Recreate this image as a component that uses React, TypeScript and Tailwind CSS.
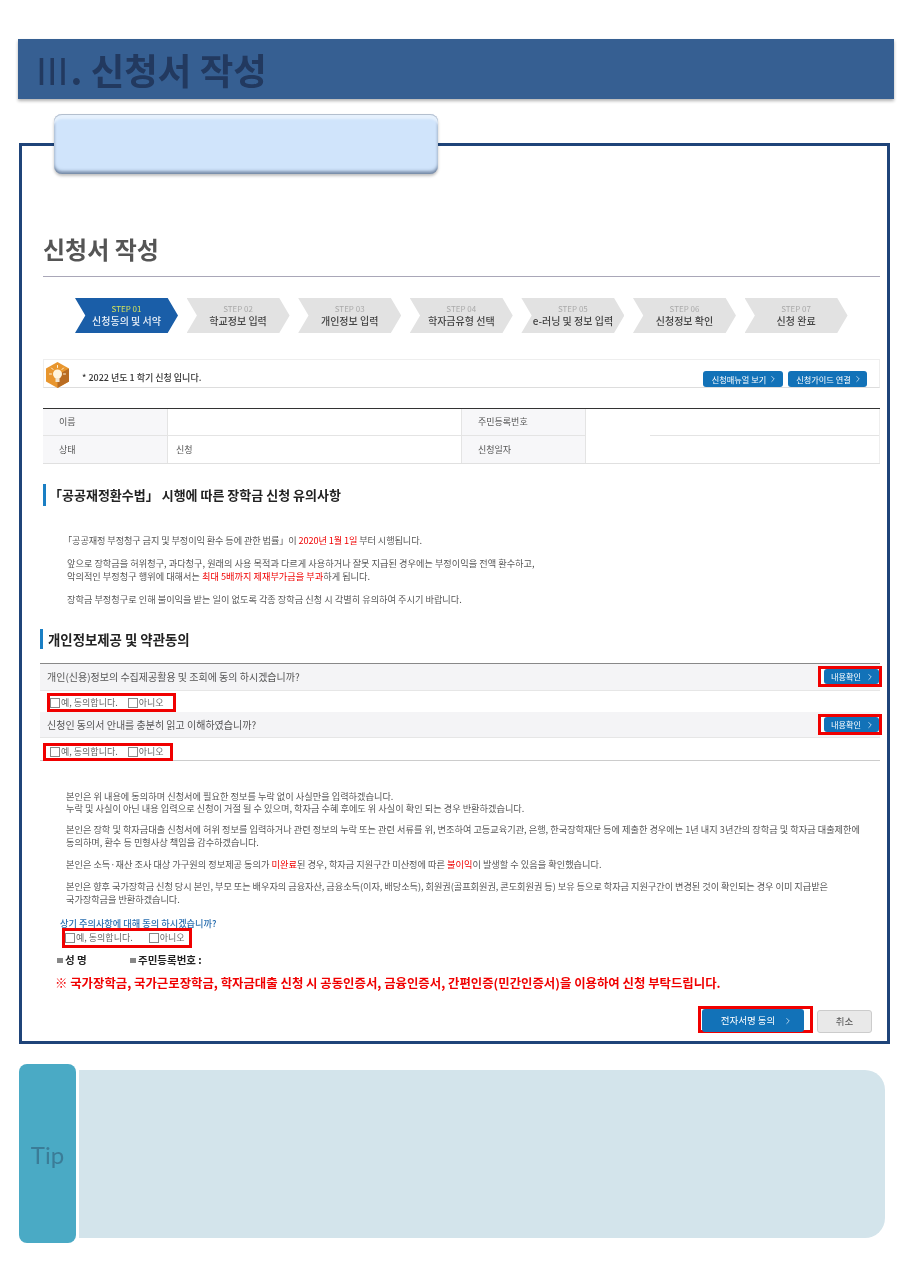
import React from 'react';
import { ChevronRight } from 'lucide-react';

const font = { fontFamily: '"Noto Sans CJK KR", "Liberation Sans", sans-serif' };

const steps = [
  ['STEP 02', '학교정보 입력'],
  ['STEP 03', '개인정보 입력'],
  ['STEP 04', '학자금유형 선택'],
  ['STEP 05', 'e-러닝 및 정보 입력'],
  ['STEP 06', '신청정보 확인'],
  ['STEP 07', '신청 완료'],
];

const BlueButton = ({ label, className, arrow = 'ml-1' }: { label: string; className: string; arrow?: string }) => (
  <div className={`flex items-center justify-center rounded-[3px] bg-[#1272b8] text-white ${className}`}>
    <span>{label}</span>
    <ChevronRight size={10} className={`text-[#cfe3f3] ${arrow}`} />
  </div>
);

const Check = ({ label }: { label: string }) => (
  <span className="flex items-center">
    <span className="mr-[1px] h-[10px] w-[10px] border border-[#888] bg-white" />
    <span>{label}</span>
  </span>
);

const Consent = ({ className, gap }: { className: string; gap: string }) => (
  <div className={`flex items-center border-[3px] border-[#f00000] text-[9px] text-[#666] ${gap} ${className}`}>
    <Check label="예, 동의합니다." />
    <Check label="아니오" />
  </div>
);

const Question = ({ text, height }: { text: string; height: string }) => (
  <div className={`flex items-start justify-between border-b border-[#e6e6e6] bg-[#f4f4f6] pl-[7px] text-[10px] text-[#555] ${height}`}>
    <span className="mt-[6px] leading-[14px]">{text}</span>
    <div className="-mr-[2px] mt-[2px] h-[21px] w-[64px] border-[3px] border-[#f00000] bg-white pl-[3px]">
      <BlueButton label="내용확인" className="h-[15px] w-[55px] pl-[3px] text-[8.2px]" arrow="ml-[4px]" />
    </div>
  </div>
);

const BulbIcon = () => (
  <svg width="23" height="26" viewBox="0 0 23 26" className="mt-[2px] ml-[2px] shrink-0">
    <polygon points="11.5,0 23,6.5 23,19.5 11.5,26 0,19.5 0,6.5" fill="#e8962e" />
    <polygon points="11.5,13 23,6.5 23,19.5 11.5,26" fill="#b96c22" />
    <circle cx="11.5" cy="12" r="4.5" fill="#fff4dc" />
    <rect x="9.5" y="16" width="4" height="4" fill="#f1e6d2" />
    <g stroke="#fff4dc" strokeWidth="1" strokeLinecap="round">
      <line x1="11.5" y1="3.5" x2="11.5" y2="5.5" />
      <line x1="5.5" y1="6" x2="7" y2="7.5" />
      <line x1="17.5" y1="6" x2="16" y2="7.5" />
      <line x1="3.5" y1="12" x2="5.5" y2="12" />
      <line x1="17.5" y1="12" x2="19.5" y2="12" />
    </g>
  </svg>
);

export default function App() {
  return (
    <div style={font} className="h-[1267px] w-[914px] overflow-hidden bg-white pt-[39px] [filter:blur(0.3px)]">
      <header className="ml-[18px] flex h-[60px] w-[876px] items-center bg-[#365f92] pl-[16px] pt-[3px] shadow-[0_2px_3px_rgba(0,0,0,0.3)]">
        <h1 className="text-[36.5px] font-bold leading-none text-[#22395f]"><span className="font-normal">Ⅲ</span>. 신청서 작성</h1>
      </header>

      <section className="relative ml-[19px] mt-[44px] h-[901px] w-[871px] border-[3px] border-[#1f4479] pl-[21px] pr-[7px]">
        <div className="absolute left-[32px] top-[-32px] h-[60px] w-[384px] rounded-[8px] bg-[#d0e4fb] shadow-[inset_0_1px_0_#b4bfce,inset_0_5px_2px_#e6f1fd,inset_0_-3px_3px_rgba(70,90,120,0.55),inset_0_0_2px_rgba(70,90,120,0.6),0_2px_3px_rgba(0,0,0,0.25)]" />

        <h2 className="mt-[87px] text-[24px] font-bold leading-[32px] text-[#555]">신청서 작성</h2>
        <div className="mt-[11px] h-[1px] bg-[#a9a7b8]" />

        <ol className="ml-[32px] mt-[21px] flex gap-[8.6px]">
          <li className="flex h-[35px] w-[103px] flex-col items-center justify-center bg-[#1a5ea8] [clip-path:polygon(0_0,90%_0,100%_50%,90%_100%,0_100%,10%_50%)]">
            <span className="text-[8px] leading-[10px] text-[#d3e35a]">STEP 01</span>
            <span className="text-[10px] font-medium leading-[14px] text-[#e9f0f8]">신청동의 및 서약</span>
          </li>
          {steps.map(([step, name]) => (
            <li key={step} className="flex h-[35px] w-[103px] flex-col items-center justify-center bg-[#e2e2e2] [clip-path:polygon(0_0,90%_0,100%_50%,90%_100%,0_100%,10%_50%)]">
              <span className="text-[8px] leading-[10px] text-[#aaa]">{step}</span>
              <span className="text-[10px] font-medium leading-[14px] text-[#444]">{name}</span>
            </li>
          ))}
        </ol>

        <div className="mt-[26px] flex h-[29px] items-start border border-[#eeeeee] border-b-[#dddddd]">
          <BulbIcon />
          <span className="ml-[13px] mt-[11px] text-[9px] font-medium leading-[14px] text-[#333]">* 2022 년도 1 학기 신청 입니다.</span>
          <div className="ml-auto mr-[12px] mt-[11px] flex gap-[5px]">
            <BlueButton label="신청매뉴얼 보기" className="h-[16px] w-[80px] pl-[4px] text-[8.2px]" arrow="ml-[2px]" />
            <BlueButton label="신청가이드 연결" className="h-[16px] w-[79px] pl-[4px] text-[8.2px]" arrow="ml-[2px]" />
          </div>
        </div>

        <div className="mt-[20px] grid grid-cols-[125px_294px_124px_1fr] grid-rows-[27px_27px] border-t border-t-[#333] border-b border-b-[#e0e0e0] text-[9px] text-[#555]">
          <div className="flex items-center border-b border-r border-[#e4e4e4] bg-[#f7f7f9] pl-[16px]">이름</div>
          <div className="border-b border-r border-[#e4e4e4]" />
          <div className="flex items-center border-b border-r border-[#e4e4e4] bg-[#f7f7f9] pl-[16px]">주민등록번호</div>
          <div className="row-span-2 border-r border-[#eeeeee]">
            <div className="ml-[64px] h-[27px] border-b border-[#e4e4e4]" />
          </div>
          <div className="flex items-center border-r border-[#e4e4e4] bg-[#f7f7f9] pl-[16px]">상태</div>
          <div className="flex items-center border-r border-[#e4e4e4] pl-[8px]">신청</div>
          <div className="flex items-center border-r border-[#e4e4e4] bg-[#f7f7f9] pl-[16px]">신청일자</div>
        </div>

        <h3 className="mt-[20px] border-l-[3px] border-[#1a7fc4] pl-[3px] text-[13px] font-bold leading-[22px] text-[#222]">「공공재정환수법」 시행에 따른 장학금 신청 유의사항</h3>

        <div className="ml-[24px] mt-[28px] text-[9.2px] leading-[13px] text-[#555]">
          <p className="-ml-[4px] tracking-[-0.12px]">「공공재정 부정청구 금지 및 부정이익 환수 등에 관한 법률」이 <span className="text-[#f00000]">2020년 1월 1일</span> 부터 시행됩니다.</p>
          <p className="mt-[10px]">앞으로 장학금을 허위청구, 과다청구, 원래의 사용 목적과 다르게 사용하거나 잘못 지급된 경우에는 부정이익을 전액 환수하고,<br />악의적인 부정청구 행위에 대해서는 <span className="text-[#f00000]">최대 5배까지 제재부가금을 부과</span>하게 됩니다.</p>
          <p className="mt-[10px]">장학금 부정청구로 인해 불이익을 받는 일이 없도록 각종 장학금 신청 시 각별히 유의하여 주시기 바랍니다.</p>
        </div>

        <h3 className="-ml-[3px] mt-[23px] border-l-[3px] border-[#1a7fc4] pl-[5px] text-[13.4px] font-bold leading-[20px] text-[#222]">개인정보제공 및 약관동의</h3>

        <div className="-ml-[3px] mt-[14px] border-t border-[#888]">
          <Question text="개인(신용)정보의 수집제공활용 및 조회에 동의 하시겠습니까?" height="h-[27px]" />
          <div className="h-[21px] pl-[7px] pt-[2px]">
            <Consent className="h-[19px] w-[129px]" gap="gap-[10px]" />
          </div>
          <Question text="신청인 동의서 안내를 충분히 읽고 이해하였습니까?" height="h-[26px]" />
          <div className="h-[23px] border-b border-[#cccccc] pl-[3px] pt-[5px]">
            <Consent className="h-[18px] w-[130px] pl-[4px]" gap="gap-[10px]" />
          </div>
        </div>

        <div className="ml-[23px] mt-[29px] text-[9.2px] leading-[13px] text-[#555]">
          <p className="leading-[12px]">본인은 위 내용에 동의하며 신청서에 필요한 정보를 누락 없이 사실만을 입력하겠습니다.<br />누락 및 사실이 아닌 내용 입력으로 신청이 거절 될 수 있으며, 학자금 수혜 후에도 위 사실이 확인 되는 경우 반환하겠습니다.</p>
          <p className="mt-[9px]">본인은 장학 및 학자금대출 신청서에 허위 정보를 입력하거나 관련 정보의 누락 또는 관련 서류를 위, 변조하여 고등교육기관, 은행, 한국장학재단 등에 제출한 경우에는 1년 내지 3년간의 장학금 및 학자금 대출제한에<br />동의하며, 환수 등 민형사상 책임을 감수하겠습니다.</p>
          <p className="mt-[9px]">본인은 소득·재산 조사 대상 가구원의 정보제공 동의가 <span className="text-[#f00000]">미완료</span>된 경우, 학자금 지원구간 미산정에 따른 <span className="text-[#f00000]">불이익</span>이 발생할 수 있음을 확인했습니다.</p>
          <p className="mt-[9px] tracking-[-0.05px]">본인은 향후 국가장학금 신청 당시 본인, 부모 또는 배우자의 금융자산, 금융소득(이자, 배당소득), 회원권(골프회원권, 콘도회원권 등) 보유 등으로 학자금 지원구간이 변경된 것이 확인되는 경우 이미 지급받은<br />국가장학금을 반환하겠습니다.</p>
        </div>

        <p className="ml-[17px] mt-[11px] text-[9.2px] font-medium leading-[13px] text-[#2a6fb0]">상기 주의사항에 대해 동의 하시겠습니까?</p>
        <Consent className="-mt-[2px] ml-[19px] h-[20px] w-[130px]" gap="gap-[16px]" />

        <div className="ml-[14px] mt-[5px] flex items-center text-[10.5px] font-bold leading-[14px] text-[#222]">
          <span className="mr-[2px] h-[5px] w-[6px] bg-[#888]" />
          <span className="w-[65px]">성 명</span>
          <span className="mr-[2px] h-[5px] w-[6px] bg-[#888]" />
          <span>주민등록번호 :</span>
        </div>

        <p className="ml-[12px] mt-[7px] whitespace-nowrap text-[12.4px] font-bold leading-[18px] text-[#f00000]">※ 국가장학금, 국가근로장학금, 학자금대출 신청 시 공동인증서, 금융인증서, 간편인증(민간인증서)을 이용하여 신청 부탁드립니다.</p>

        <div className="mt-[14px] flex items-start justify-end gap-[4px] pr-[8px]">
          <div className="h-[27px] w-[115px] border-[3px] border-[#f00000] pl-[1px]">
            <BlueButton label="전자서명 동의" className="h-[23px] w-[102px] pl-[8px] text-[9.5px]" arrow="ml-[8px]" />
          </div>
          <button className="mt-[4px] h-[23px] w-[55px] rounded-[3px] border border-[#cccccc] bg-[#e9e9e9] text-[9.5px] text-[#555]">취소</button>
        </div>
      </section>

      <div className="ml-[19px] mt-[20px] flex h-[179px] items-center gap-[3px]">
        <div className="flex h-[179px] w-[57px] items-center justify-center rounded-[8px] bg-[#4aaac5] pt-[2px]">
          <span className="text-[24px] text-[#3b7c97]" style={{ fontFamily: 'Lato, sans-serif' }}>Tip</span>
        </div>
        <div className="h-[168px] w-[806px] rounded-r-[20px] bg-[#d3e4eb]" />
      </div>
    </div>
  );
}
